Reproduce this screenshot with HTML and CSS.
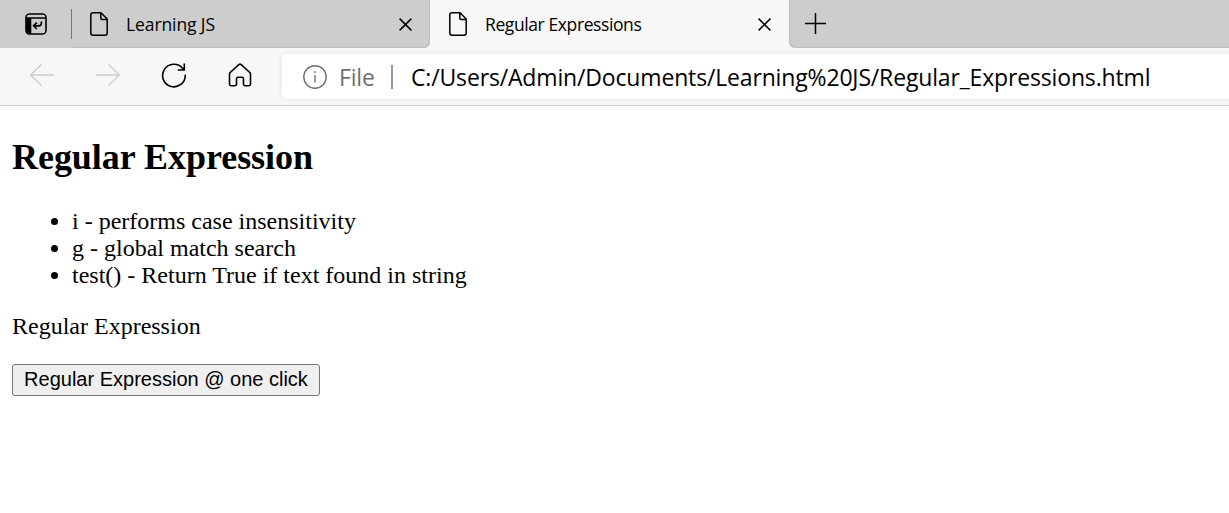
FILE: index.html
```html
<!DOCTYPE html>
<html lang="en">
<head>
<meta charset="utf-8">
<title>Regular Expressions</title>
<link rel="stylesheet" href="styles.css">
</head>
<body>
<header class="browser">
  <div class="tabstrip">
    <div class="strip-start">
      <svg class="tab-actions" width="22" height="22" viewBox="0 0 22 22"><rect x="1" y="1" width="20" height="20" rx="3.4" fill="none" stroke="#000" stroke-width="1.6"/><path d="M1 5h5.300v16H4a3 3 0 0 1-3-3z"/><path d="M1 5h20" stroke="#000" stroke-width="1.5"/><path d="M16.400 8.500v1.500a2.800 2.800 0 0 1-2.800 2.800H9M11.800 9.600 8.600 12.800l3.200 3.200" fill="none" stroke="#000" stroke-width="1.7"/></svg>
      <span class="divider"></span>
    </div>
    <div class="tab tab-idle">
      <svg class="page-icon" width="18" height="24" viewBox="0 0 18 24"><path d="M3 .8h8l6.200 6.200v14a2.200 2.200 0 0 1-2.200 2.200H3A2.200 2.200 0 0 1 .8 21V3A2.200 2.200 0 0 1 3 .8zM10.800.8v5.400a1.200 1.200 0 0 0 1.200 1.200h5"/></svg>
      <span class="tab-title title-learning">Learning JS</span>
      <svg class="close" width="13" height="13" viewBox="0 0 13 13"><path d="M.6.6l11.800 11.800M12.400.6.6 12.400"/></svg>
    </div>
    <div class="tab tab-active">
      <svg class="page-icon" width="18" height="24" viewBox="0 0 18 24"><path d="M3 .8h8l6.200 6.200v14a2.200 2.200 0 0 1-2.200 2.200H3A2.200 2.200 0 0 1 .8 21V3A2.200 2.200 0 0 1 3 .8zM10.800.8v5.400a1.200 1.200 0 0 0 1.200 1.200h5"/></svg>
      <span class="tab-title title-regular">Regular Expressions</span>
      <svg class="close" width="13" height="13" viewBox="0 0 13 13"><path d="M.6.6l11.800 11.800M12.400.6.6 12.400"/></svg>
    </div>
    <div class="strip-end">
      <svg class="plus" width="21" height="21" viewBox="0 0 21 21"><path d="M10.500 0v21M0 10.500h21"/></svg>
    </div>
  </div>
  <div class="toolbar">
    <nav class="nav">
      <svg class="nav-off" width="26" height="26" viewBox="0 0 26 26"><path d="M25 13H1.500M12.500 2.500 1.500 13l11 10.500"/></svg>
      <svg class="nav-off" width="26" height="26" viewBox="0 0 26 26"><path d="M1 13h23.500M13.500 2.500l11 10.500-11 10.500"/></svg>
      <svg class="nav-on" width="26" height="26" viewBox="0 0 26 26"><path d="M24.200 12.800A11.300 11.300 0 1 1 21.700 6.400L23.300 8M23.300 1.500v6.500h-6.500"/></svg>
      <svg class="nav-on" width="26" height="26" viewBox="0 0 26 26"><path d="M11.800 2.700a1.800 1.800 0 0 1 2.400 0l8.500 7.600a2 2 0 0 1 .8 1.600V22a1.800 1.800 0 0 1-1.800 1.800h-3.400a1.800 1.800 0 0 1-1.800-1.800v-5.200a1.600 1.600 0 0 0-1.600-1.600h-3.800a1.600 1.600 0 0 0-1.600 1.600V22a1.800 1.800 0 0 1-1.800 1.800H4.300A1.800 1.800 0 0 1 2.500 22V11.900a2 2 0 0 1 .8-1.600z"/></svg>
    </nav>
    <div class="address">
      <svg class="info" width="24" height="24" viewBox="0 0 24 24"><circle cx="12" cy="12" r="11.200"/><path d="M12 10v7.500M12 6.200v1.900"/></svg>
      <span class="scheme">File</span>
      <span class="address-divider"></span>
      <span class="url">C:/Users/Admin/Documents/Learning%20JS/Regular_Expressions.html</span>
    </div>
  </div>
</header>
<main class="page">
  <h2 class="heading">Regular Expression</h2>
  <ul class="list">
    <li>i - performs case insensitivity</li>
    <li>g - global match search</li>
    <li>test() - Return True if text found in string</li>
  </ul>
  <p class="para">Regular Expression</p>
  <button class="button" type="button">Regular Expression @ one click</button>
</main>
</body>
</html>
```
FILE: styles.css
```css
* { box-sizing: border-box; }
html, body { height: 100%; }
body { margin: 0; background: #fff; color: #000; overflow: hidden; }
svg { display: block; flex: none; fill: none; }

.browser { height: 106px; background: #f7f7f7; border-bottom: 1px solid #cecece; font-family: "Open Sans", "Noto Sans", sans-serif; }
.tabstrip { display: flex; height: 48px; background: #f7f7f7; }
.strip-start { display: flex; align-items: center; gap: 24px; width: 72px; padding-left: 25px; background: #cdcdcd; }
.tab-actions { fill: #000; margin-top: -1px; }
.divider { width: 1px; height: 30px; background: #777; }
.tab { display: flex; align-items: center; height: 48px; }
.tab-idle { width: 358px; padding: 0 18px 0 18px; background: #cdcdcd; border-bottom-right-radius: 6px; box-shadow: inset -1px -1px 1px #bdbdbd; }
.tab-active { width: 359px; padding: 0 18px 0 19px; }
.page-icon { stroke: #000; stroke-width: 1.5; }
.tab-title { margin-left: 18px; font-size: 17.500px; line-height: 24px; white-space: nowrap; }
.title-learning { letter-spacing: -.1px; }
.title-regular { letter-spacing: -.4px; }
.close { margin-left: auto; stroke: #000; stroke-width: 1.5; }
.strip-end { display: flex; align-items: center; flex: 1; padding-left: 16px; background: #cdcdcd; border-bottom-left-radius: 6px; box-shadow: inset 1px -1px 1px #bdbdbd; }
.plus { margin-top: -2px; stroke: #000; stroke-width: 1.5; }

.toolbar { display: flex; align-items: center; height: 57px; }
.nav { display: flex; gap: 40px; width: 282px; padding-left: 29px; margin-top: -3px; }
.nav-off { stroke: #cdcdcd; stroke-width: 1.4; }
.nav-on { stroke: #000; stroke-width: 1.6; }
.address { display: flex; align-items: center; flex: 1; height: 45px; padding-left: 21px; background: #fff; border-radius: 5px 0 0 5px; box-shadow: 0 0 5px rgba(0,0,0,.1); font-size: 23px; line-height: 32px; white-space: nowrap; }
.info { stroke: #707070; stroke-width: 1.4; }
.scheme { width: 52px; margin-left: 12px; color: #707070; letter-spacing: -.2px; }
.address-divider { width: 2px; height: 24px; margin-right: 18px; background: #999; }
.url { letter-spacing: -.16px; }

.page { padding: 31px 12px 0; font: 24px/27px "Liberation Serif", "Times New Roman", serif; }
.heading { margin: 0 0 30px; font-size: 36px; line-height: 41px; font-weight: 700; letter-spacing: -.04px; }
.list { margin: 0 0 24px; padding-left: 60px; }
.para { margin: 0 0 24px; }
.button { display: block; width: 308px; height: 32px; padding: 0 0 2px; border: 1px solid #767676; border-radius: 3px; background: #efefef; color: #000; font: 20px/28px "Liberation Sans", Arial, sans-serif; white-space: nowrap; }
```
